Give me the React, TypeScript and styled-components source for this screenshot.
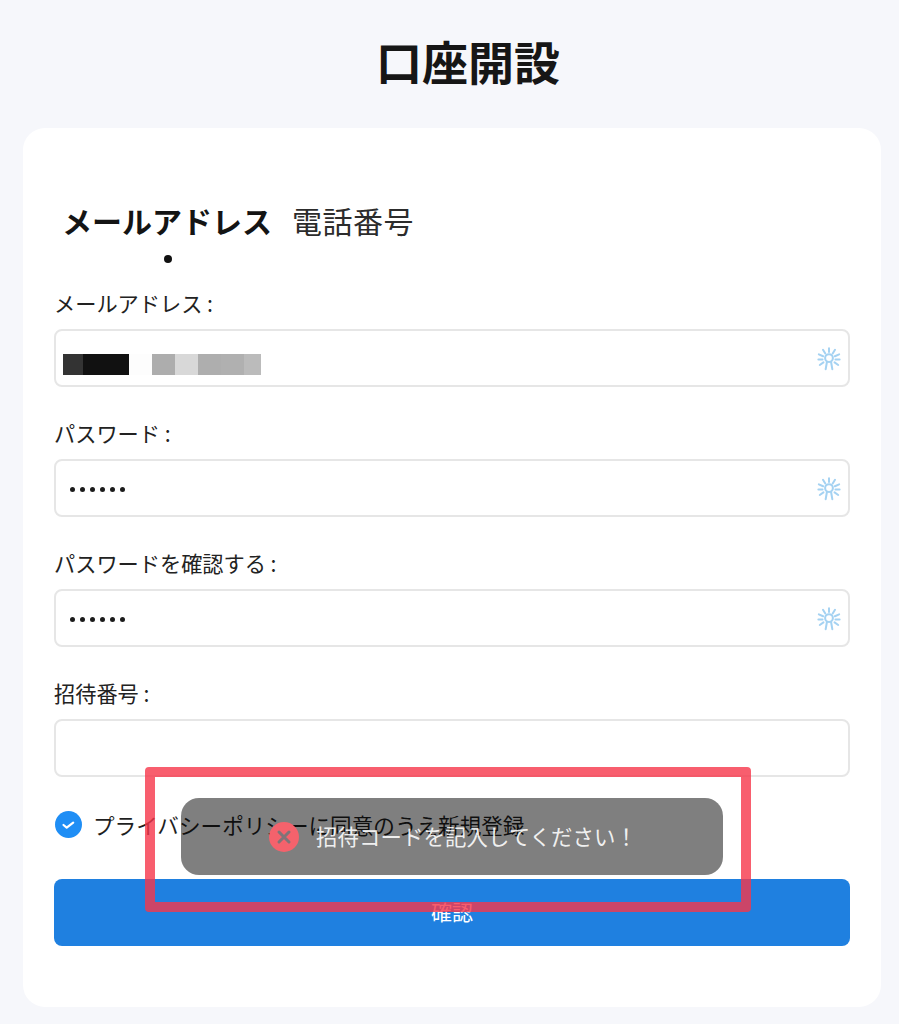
import React from "react";
import styled, { createGlobalStyle } from "styled-components";

const Global = createGlobalStyle`
  html, body { margin: 0; padding: 0; background: #f6f7fb; }
  * { box-sizing: border-box; }
  body { font-family: "Noto Sans CJK JP", "Noto Sans", sans-serif; color: #1a1a1a; }
`;

const Page = styled.div`
  position: relative;
  width: 899px;
  height: 1024px;
  overflow: hidden;
  background: #f6f7fb;
  padding: 0 18px 17px 23px;
  display: flex;
  flex-direction: column;
`;

const Title = styled.h1`
  margin: 0;
  height: 128px;
  padding: 26px 0 0 32px;
  font-size: 46px;
  line-height: 68px;
  font-weight: 700;
  text-align: center;
  color: #161616;
`;

const Card = styled.div`
  flex: 1;
  background: #fff;
  border-radius: 22px;
  padding: 69px 31px 0;
  display: flex;
  flex-direction: column;
`;

const Tabs = styled.div`
  display: flex;
  gap: 20px;
  padding-left: 8px;
  height: 94px;
`;

const Tab = styled.div<{ $active?: boolean }>`
  position: relative;
  font-size: 30px;
  line-height: 46px;
  height: 46px;
  letter-spacing: ${(p) => (p.$active ? "0" : "0.5px")};
  font-weight: ${(p) => (p.$active ? 700 : 400)};
  color: ${(p) => (p.$active ? "#141414" : "#2c2c2c")};
  ${(p) =>
    p.$active &&
    `&::after {
      content: "";
      position: absolute;
      left: 50%;
      top: 58px;
      width: 8px;
      height: 8px;
      margin-left: -3px;
      border-radius: 50%;
      background: #111;
    }`}
`;

const FieldList = styled.div`
  display: flex;
  flex-direction: column;
  gap: 34px;
`;

const Field = styled.div`
  display: flex;
  flex-direction: column;
`;

const Label = styled.label`
  font-size: 21.2px;
  line-height: 24px;
  height: 38px;
  color: #222;
`;

const InputBox = styled.div`
  height: 58px;
  border: 2px solid #e6e6e6;
  border-radius: 8px;
  display: flex;
  align-items: center;
  justify-content: space-between;
  padding: 0 7px;
`;

const Masked = styled.div`
  display: flex;
  height: 21px;
  margin-top: 12px;
`;

const Cell = styled.span<{ $w: number; $c: string }>`
  width: ${(p) => p.$w}px;
  height: 100%;
  background: ${(p) => p.$c};
`;

const Dots = styled.div`
  display: flex;
  gap: 5px;
  padding-left: 7px;
  margin-top: 2px;
`;

const Dot = styled.span`
  width: 5px;
  height: 5px;
  border-radius: 50%;
  background: #1c1c1c;
`;

const Spark = styled.svg`
  margin-top: 1px;
  flex: none;
`;

const AgreeRow = styled.div`
  display: flex;
  align-items: center;
  gap: 11px;
  height: 102px;
  padding: 0 0 7px 1px;
  font-size: 21.6px;
  line-height: 30px;
  color: #1f1f1f;
`;

const Check = styled.span`
  width: 27px;
  height: 27px;
  border-radius: 50%;
  background: #1f8ef5;
  display: flex;
  align-items: center;
  justify-content: center;
  flex: none;
`;

const Submit = styled.button`
  height: 67px;
  border: 0;
  border-radius: 8px;
  background: #1f80e0;
  color: #fff;
  font: inherit;
  font-size: 21px;
  padding: 0 0 4px;
`;

const Toast = styled.div`
  position: absolute;
  left: 181px;
  top: 798px;
  width: 542px;
  height: 77px;
  border-radius: 18px;
  background: rgba(0, 0, 0, 0.5);
  display: flex;
  align-items: center;
  gap: 17px;
  padding-left: 88px;
  color: rgba(255, 255, 255, 0.9);
  font-size: 21.4px;
  letter-spacing: 0.1px;
`;

const ToastText = styled.span`
  margin-top: -2px;
`;

const Annotation = styled.div`
  position: absolute;
  left: 145px;
  top: 767px;
  width: 606px;
  height: 145px;
  border: 10px solid rgba(246, 54, 74, 0.8);
  border-radius: 4px;
  pointer-events: none;
`;

const SparkIcon = () => (
  <Spark width="24" height="24" viewBox="0 0 26 26" fill="none" stroke="#a4d2f2" strokeWidth="2.2" strokeLinecap="round">
    <circle cx="13" cy="12" r="4.2" />
    <path d="M10.8 16 9.4 24M15.2 16 16.6 24M13 1.5v4M6.5 3 9 7M19.5 3 17 7M2 8l4.6 2M24 8l-4.6 2M1.5 13.5h4.5M24.5 13.5H20M3 19.5l4-2.8M23 19.5l-4-2.8" />
  </Spark>
);

const fields = [
  { label: "メールアドレス :", kind: "mask" },
  { label: "パスワード :", kind: "pw" },
  { label: "パスワードを確認する :", kind: "pw" },
  { label: "招待番号 :", kind: "empty" },
];

const cells: [number, string][] = [
  [20, "#333"],
  [46, "#111"],
  [23, "#fdfdfd"],
  [23, "#adadad"],
  [23, "#d8d8d8"],
  [23, "#aeaeae"],
  [23, "#b0b0b0"],
  [17, "#bbb"],
];

export default function App() {
  return (
    <Page>
      <Global />
      <Title>口座開設</Title>
      <Card>
        <Tabs>
          <Tab $active>メールアドレス</Tab>
          <Tab>電話番号</Tab>
        </Tabs>
        <FieldList>
          {fields.map((f) => (
            <Field key={f.label}>
              <Label>{f.label}</Label>
              <InputBox>
                {f.kind === "mask" && (
                  <Masked>
                    {cells.map(([w, c], i) => (
                      <Cell key={i} $w={w} $c={c} />
                    ))}
                  </Masked>
                )}
                {f.kind === "pw" && (
                  <Dots>
                    {[0, 1, 2, 3, 4, 5].map((i) => (
                      <Dot key={i} />
                    ))}
                  </Dots>
                )}
                {f.kind !== "empty" && <SparkIcon />}
              </InputBox>
            </Field>
          ))}
        </FieldList>
        <AgreeRow>
          <Check>
            <svg width="15" height="15" viewBox="0 0 15 15" fill="none" stroke="#fff" strokeWidth="2.2" strokeLinecap="round" strokeLinejoin="round">
              <path d="M2.5 8l3.2 2.6 6.5-5" />
            </svg>
          </Check>
          プライバシーポリシーに同意のうえ新規登録
        </AgreeRow>
        <Submit>確認</Submit>
      </Card>
      <Toast>
        <svg width="30" height="30" viewBox="0 0 30 30" fill="none">
          <circle cx="15" cy="15" r="15" fill="#f4626c" />
          <path d="M10 10l10 10M20 10 10 20" stroke="#7f7478" strokeWidth="3" strokeLinecap="round" />
        </svg>
        <ToastText>招待コードを記入してください！</ToastText>
      </Toast>
      <Annotation />
    </Page>
  );
}
